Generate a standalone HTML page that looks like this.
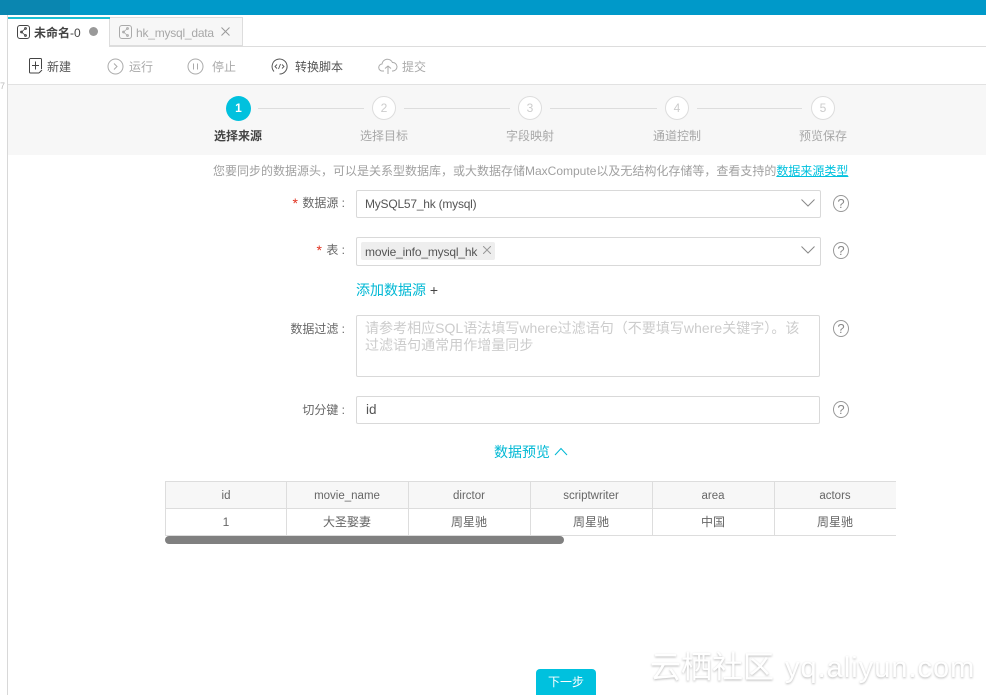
<!DOCTYPE html>
<html><head><meta charset="utf-8">
<style>
html,body{margin:0;padding:0;background:#fff}
#p{position:relative;width:986px;height:695px;overflow:hidden;background:#fff;font-family:"Liberation Sans","Noto Sans CJK SC",sans-serif;font-size:12px;color:#555}
#p div,#p span.a,#p svg{position:absolute}
.t{white-space:nowrap;line-height:16px}
.c{transform:translateX(-50%)}
.r{transform:translateX(-100%)}
.cn{width:26px;height:26px;border-radius:50%;background:#fff;border:1px solid #ddd;box-sizing:border-box;top:95px;text-align:center;line-height:24px;color:#ccc;font-size:12px}
.ln{height:1px;background:#ddd;top:108px}
.box{border:1px solid #d9d9d9;box-sizing:border-box;background:#fff;border-radius:2px}
.v{width:1px;background:#ddd;top:482px;height:53px}
.s{color:#e0301e;font-size:14px;line-height:0;margin-right:1px;vertical-align:-1px}
</style></head><body><div id="p">
<div style="left:0;top:0;width:986px;height:15px;background:#0099c9"></div>
<div style="left:0;top:0;width:70px;height:15px;background:#0a86b0"></div>
<div style="left:7px;top:15px;width:1px;height:680px;background:#d8d8d8"></div>
<div class="t" style="left:0;top:78px;font-size:9px;color:#bbb">7</div>

<div style="left:8px;top:46px;width:978px;height:1px;background:#ddd"></div>
<div style="left:8px;top:17px;width:102px;height:30px;background:#fff;border-right:1px solid #ddd;box-sizing:border-box"></div>
<div style="left:8px;top:17px;width:102px;height:2px;background:#1bbfd3"></div>
<div style="left:110px;top:17px;width:133px;height:29px;background:#f7f7f7;border:1px solid #ddd;border-left:0;box-sizing:border-box"></div>
<svg style="left:17px;top:25px" width="13" height="14" viewBox="0 0 13 14" fill="none" stroke="#444" stroke-width="1"><rect x=".5" y=".5" width="12" height="13" rx="2.500"/><path d="M8.500 3.500 4.500 7 8.500 10.500" stroke-width=".8"/><circle cx="8.500" cy="3.500" r=".9"/><circle cx="4.500" cy="7" r=".9"/><circle cx="8.500" cy="10.500" r=".9"/></svg>
<div class="t" style="left:34px;top:25px;font-size:12px;font-weight:bold;color:#444">未命名<span style="font-weight:normal">-0</span></div>
<div style="left:89px;top:27px;width:9px;height:9px;border-radius:50%;background:#999"></div>
<svg style="left:119px;top:25px" width="13" height="14" viewBox="0 0 13 14" fill="none" stroke="#aaa" stroke-width="1"><rect x=".5" y=".5" width="12" height="13" rx="2.500"/><path d="M8.500 3.500 4.500 7 8.500 10.500" stroke-width=".8"/><circle cx="8.500" cy="3.500" r=".9"/><circle cx="4.500" cy="7" r=".9"/><circle cx="8.500" cy="10.500" r=".9"/></svg>
<div class="t" style="left:136px;top:25px;font-size:12px;letter-spacing:-.22px;color:#a8a8a8">hk_mysql_data</div>
<svg style="left:221px;top:27px" width="9" height="9" viewBox="0 0 9 9" stroke="#999" fill="none"><path d="M.5.5l8 8M8.500.5l-8 8"/></svg>

<svg style="left:29px;top:58px" width="15" height="17" viewBox="0 0 15 17" fill="none" stroke="#444"><path d="M12.500 11V1.500a1 1 0 0 0-1-1h-10a1 1 0 0 0-1 1V14a1 1 0 0 0 1 1H10"/><path d="M6.500 3.500v8M3 7.500h7"/><path d="M10 15l3-3"/></svg>
<div class="t" style="left:47px;top:59px;font-size:12px;color:#555">新建</div>
<svg style="left:107px;top:58px" width="17" height="17" viewBox="0 0 17 17" fill="none" stroke="#aaa"><circle cx="8.500" cy="8.500" r="7.500"/><path d="M7 5.500l3 3-3 3"/></svg>
<div class="t" style="left:129px;top:59px;color:#aaa">运行</div>
<svg style="left:187px;top:58px" width="17" height="17" viewBox="0 0 17 17" fill="none" stroke="#aaa"><circle cx="8.500" cy="8.500" r="7.500"/><path d="M6.500 5.500v6M10.500 5.500v6"/></svg>
<div class="t" style="left:212px;top:59px;color:#aaa">停止</div>
<svg style="left:271px;top:58px" width="17" height="17" viewBox="0 0 17 17" fill="none" stroke="#555"><path d="M3 13.500A7.500 7.500 0 1 1 8.500 16"/><path d="M6 6.500 4 8.500l2 2M11 6.500l2 2-2 2M9.500 6l-2 5" stroke-width=".9"/></svg>
<div class="t" style="left:295px;top:59px;color:#555">转换脚本</div>
<svg style="left:378px;top:58px" width="20" height="17" viewBox="0 0 20 17" fill="none" stroke="#aaa"><path d="M6 13H4.500a3.500 3.500 0 0 1-.5-7 5.500 5.500 0 0 1 10.500-1.500A4.200 4.200 0 0 1 15 13h-1"/><path d="M10 16V8M7 10.500 10 8l3 2.500"/></svg>
<div class="t" style="left:402px;top:59px;color:#aaa">提交</div>

<div style="left:8px;top:84px;width:978px;height:1px;background:#e2e2e2"></div>
<div style="left:8px;top:85px;width:978px;height:70px;background:#f7f7f7"></div>

<div class="cn" style="left:226px;top:96px;width:25px;height:25px;background:#00c1de;border:0;color:#fff;font-weight:bold;line-height:25px">1</div>
<div class="ln" style="left:258px;width:106px"></div>
<div class="cn" style="left:372px;top:96px;width:24px;height:24px;line-height:22px">2</div>
<div class="ln" style="left:404px;width:106px"></div>
<div class="cn" style="left:518px;top:96px;width:24px;height:24px;line-height:22px">3</div>
<div class="ln" style="left:550px;width:107px"></div>
<div class="cn" style="left:665px;top:96px;width:24px;height:24px;line-height:22px">4</div>
<div class="ln" style="left:697px;width:105px"></div>
<div class="cn" style="left:811px;top:96px;width:24px;height:24px;line-height:22px">5</div>
<div class="t" style="left:214px;top:128px;font-weight:bold;color:#444">选择来源</div>
<div class="t" style="left:360px;top:128px;color:#a8a8a8">选择目标</div>
<div class="t" style="left:506px;top:128px;color:#a8a8a8">字段映射</div>
<div class="t" style="left:653px;top:128px;color:#a8a8a8">通道控制</div>
<div class="t" style="left:799px;top:128px;color:#a8a8a8">预览保存</div>

<div class="t" style="left:213px;top:163px;color:#a0a0a0">您要同步的数据源头，可以是关系型数据库，或大数据存储MaxCompute以及无结构化存储等，查看支持的<span style="color:#00c1de;text-decoration:underline">数据来源类型</span></div>

<div class="t r" style="left:345px;top:195px;color:#666"><span class="s">*</span> 数据源 :</div>
<div class="box" style="left:356px;top:190px;width:465px;height:28px"></div>
<div class="t" style="left:365px;top:196px;letter-spacing:-.22px;color:#555">MySQL57_hk (mysql)</div>
<svg style="left:801px;top:199px" width="14" height="8" viewBox="0 0 14 8" fill="none" stroke="#888"><path d="M.5.500 7 7 13.500.500"/></svg>
<svg style="left:833px;top:195px" width="16" height="17" viewBox="0 0 16 17"><ellipse cx="8" cy="8.500" rx="7.500" ry="8" fill="none" stroke="#999"/><text x="8" y="13" text-anchor="middle" font-size="13" fill="#888" font-family="Liberation Sans">?</text></svg>

<div class="t r" style="left:345px;top:242px;color:#666"><span class="s">*</span> 表 :</div>
<div class="box" style="left:356px;top:237px;width:465px;height:29px"></div>
<div style="left:361px;top:242px;width:134px;height:18px;background:#eee;border-radius:2px"></div>
<div class="t" style="left:365px;top:244px;letter-spacing:-.17px;color:#555">movie_info_mysql_hk</div>
<svg style="left:483px;top:246px" width="8" height="8" viewBox="0 0 8 8" stroke="#999" fill="none"><path d="M0 0l8 8M8 0 0 8"/></svg>
<svg style="left:801px;top:246px" width="14" height="8" viewBox="0 0 14 8" fill="none" stroke="#888"><path d="M.5.500 7 7 13.500.500"/></svg>
<svg style="left:833px;top:242px" width="16" height="17" viewBox="0 0 16 17"><ellipse cx="8" cy="8.500" rx="7.500" ry="8" fill="none" stroke="#999"/><text x="8" y="13" text-anchor="middle" font-size="13" fill="#888" font-family="Liberation Sans">?</text></svg>

<div class="t" style="left:356px;top:282px;font-size:14px;color:#00b8d4">添加数据源 <span style="color:#444">+</span></div>

<div class="t r" style="left:345px;top:321px;color:#666">数据过滤 :</div>
<div class="box" style="left:356px;top:315px;width:464px;height:62px"></div>
<div class="t" style="left:365px;top:320px;font-size:14px;letter-spacing:.03px;color:#ccc;line-height:17px">请参考相应SQL语法填写where过滤语句（不要填写where关键字）。该<br>过滤语句通常用作增量同步</div>
<svg style="left:833px;top:320px" width="16" height="17" viewBox="0 0 16 17"><ellipse cx="8" cy="8.500" rx="7.500" ry="8" fill="none" stroke="#999"/><text x="8" y="13" text-anchor="middle" font-size="13" fill="#888" font-family="Liberation Sans">?</text></svg>

<div class="t r" style="left:345px;top:402px;color:#666">切分键 :</div>
<div class="box" style="left:356px;top:396px;width:464px;height:28px"></div>
<div class="t" style="left:366px;top:402px;font-size:13.500px;color:#555">id</div>
<svg style="left:833px;top:401px" width="16" height="17" viewBox="0 0 16 17"><ellipse cx="8" cy="8.500" rx="7.500" ry="8" fill="none" stroke="#999"/><text x="8" y="13" text-anchor="middle" font-size="13" fill="#888" font-family="Liberation Sans">?</text></svg>

<div class="t" style="left:494px;top:444px;font-size:14px;color:#00b8d4">数据预览</div>
<svg style="left:554px;top:447px" width="14" height="9" viewBox="0 0 14 9" fill="none" stroke="#00b8d4"><path d="M1 8 7 1.500 13 8"/></svg>

<div style="left:165px;top:482px;width:731px;height:27px;background:#f7f7f7"></div>
<div style="left:165px;top:481px;width:731px;height:1px;background:#ddd"></div>
<div style="left:165px;top:508px;width:731px;height:1px;background:#ddd"></div>
<div style="left:165px;top:535px;width:731px;height:1px;background:#ddd"></div>
<div class="v" style="left:165px"></div><div class="v" style="left:286px"></div><div class="v" style="left:408px"></div><div class="v" style="left:530px"></div><div class="v" style="left:652px"></div><div class="v" style="left:774px"></div>
<div class="t c" style="left:226px;top:488px;font-size:11.500px;color:#666">id</div>
<div class="t c" style="left:347px;top:488px;font-size:11.500px;color:#666">movie_name</div>
<div class="t c" style="left:469px;top:488px;font-size:11.500px;color:#666">dirctor</div>
<div class="t c" style="left:591px;top:488px;font-size:11.500px;color:#666">scriptwriter</div>
<div class="t c" style="left:713px;top:488px;font-size:11.500px;color:#666">area</div>
<div class="t c" style="left:835px;top:488px;font-size:11.500px;color:#666">actors</div>
<div class="t c" style="left:226px;top:514px;color:#666">1</div>
<div class="t c" style="left:347px;top:514px;color:#666">大圣娶妻</div>
<div class="t c" style="left:469px;top:514px;color:#666">周星驰</div>
<div class="t c" style="left:591px;top:514px;color:#666">周星驰</div>
<div class="t c" style="left:713px;top:514px;color:#666">中国</div>
<div class="t c" style="left:835px;top:514px;color:#666">周星驰</div>
<div style="left:165px;top:536px;width:399px;height:8px;background:#808080;border-radius:4px"></div>

<div style="left:536px;top:669px;width:60px;height:26px;background:#00c1de;border-radius:4px 4px 0 0;color:#fff;text-align:center;line-height:26px;font-size:12px">下一步</div>
<div class="t" style="left:650px;top:652px;font-size:31px;line-height:32px;color:#fff;text-shadow:0 1px 2px rgba(0,0,0,.28)">云栖社区</div>
<div class="t" style="left:785px;top:652px;font-size:29px;letter-spacing:1px;line-height:32px;color:#fff;text-shadow:0 1px 2px rgba(0,0,0,.28)">yq.aliyun.com</div>
</div></body></html>
